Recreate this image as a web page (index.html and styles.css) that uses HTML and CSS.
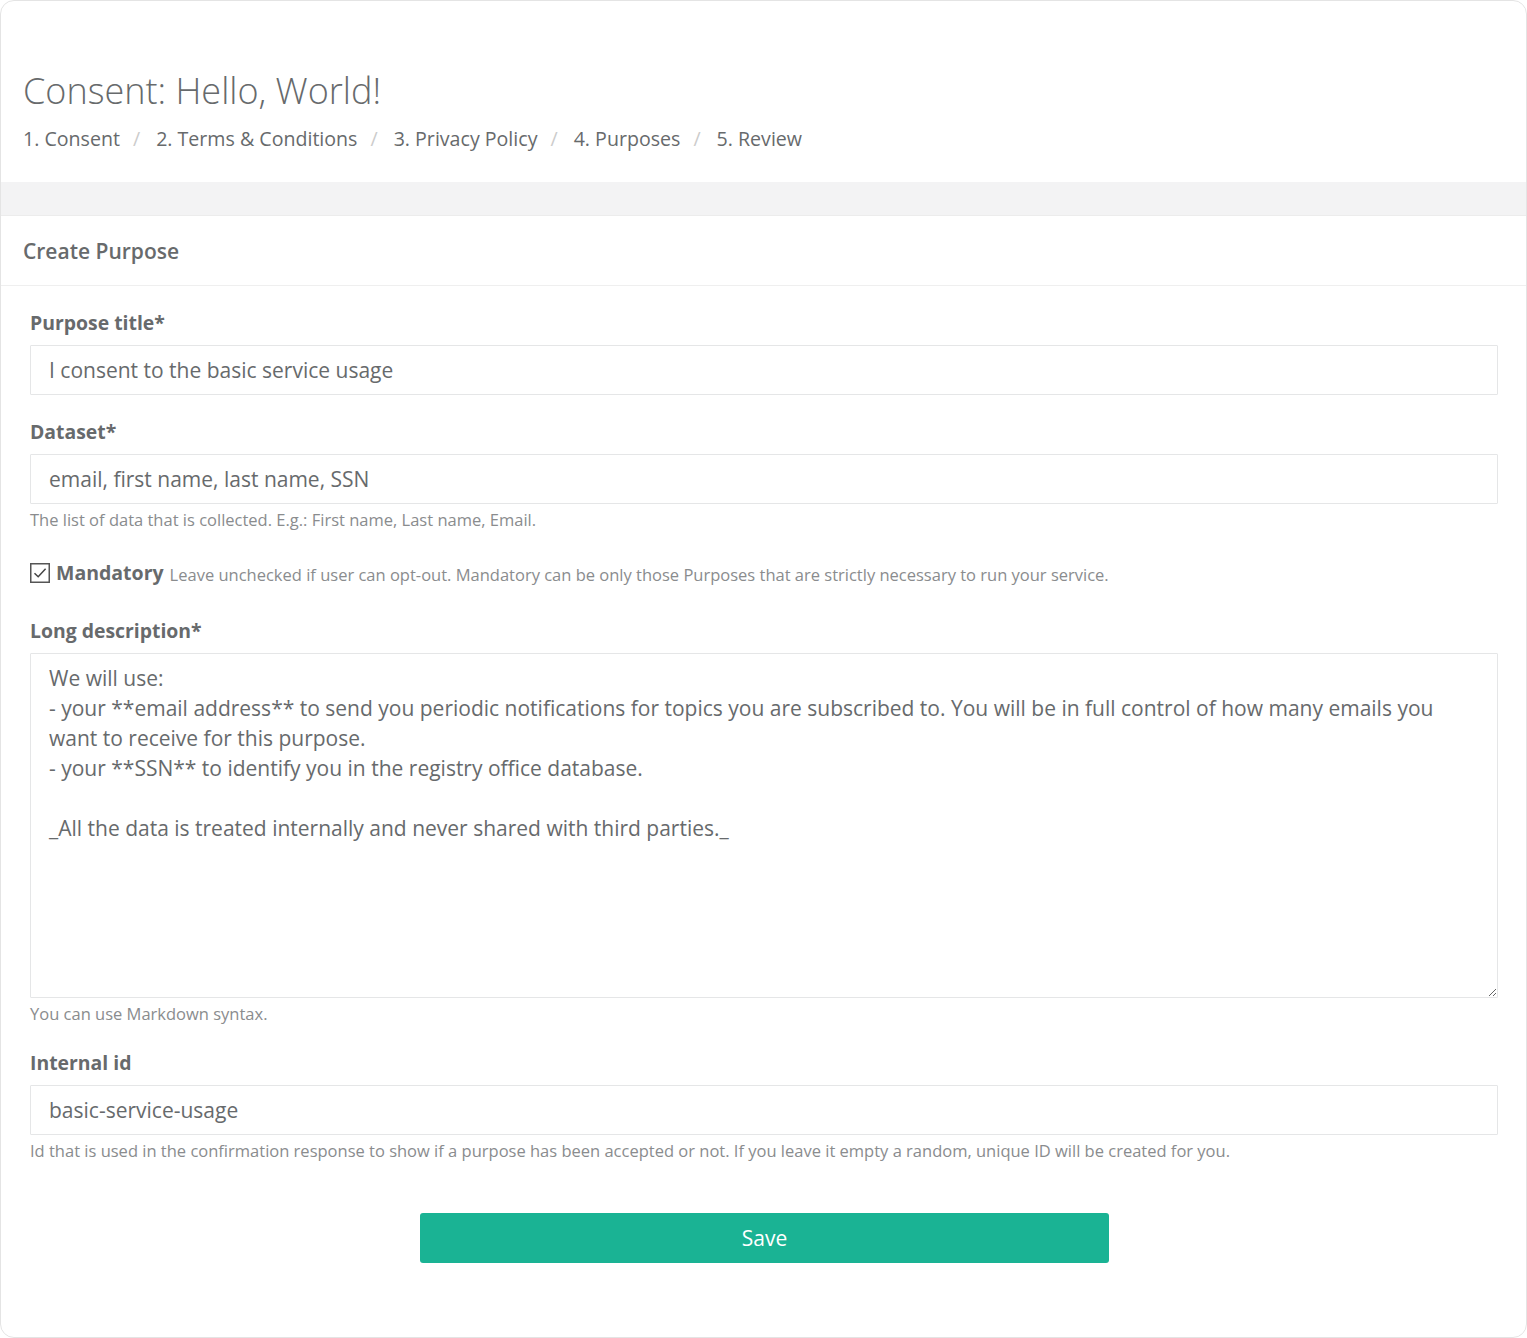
FILE: index.html
```html
<!DOCTYPE html>
<html lang="en">
<head>
    <meta charset="UTF-8">
    <title>Consent: Hello, World!</title>
    <meta name="viewport" content="width=device-width, initial-scale=1.0">
    <link rel="stylesheet" href="styles.css">
</head>
<body>
    <div class="frame">
        <div class="page-heading">
            <h1>Consent: Hello, World!</h1>
            <ol class="breadcrumb">
                <li>1. Consent</li>
                <li>2. Terms &amp; Conditions</li>
                <li>3. Privacy Policy</li>
                <li>4. Purposes</li>
                <li>5. Review</li>
            </ol>
        </div>
        <div class="band"></div>
        <div class="ibox">
            <div class="ibox-title">
                <h5>Create Purpose</h5>
            </div>
            <form class="ibox-content">
                <div class="form-group">
                    <label for="title">Purpose title*</label>
                    <input type="text" id="title" class="form-control" value="I consent to the basic service usage">
                </div>
                <div class="form-group">
                    <label for="dataset">Dataset*</label>
                    <input type="text" id="dataset" class="form-control" value="email, first name, last name, SSN">
                    <span class="help-block">The list of data that is collected. E.g.: First name, Last name, Email.</span>
                </div>
                <div class="form-group check-group">
                    <span class="check-box">
                        <svg width="20" height="20" viewBox="0 0 20 20">
                            <rect x="0.75" y="0.75" width="18.5" height="18.5" fill="#fff" stroke="#555" stroke-width="1.5"/>
                            <path d="M4.5 10.2 L8.2 13.8 L15.6 5.8" fill="none" stroke="#444" stroke-width="1.5"/>
                        </svg>
                    </span>
                    <strong>Mandatory</strong>
                    <span class="check-help">Leave unchecked if user can opt-out. Mandatory can be only those Purposes that are strictly necessary to run your service.</span>
                </div>
                <div class="form-group desc-group">
                    <label for="description">Long description*</label>
                    <textarea id="description" class="form-control">We will use:
- your **email address** to send you periodic notifications for topics you are subscribed to. You will be in full control of how many emails you want to receive for this purpose.
- your **SSN** to identify you in the registry office database.

_All the data is treated internally and never shared with third parties._</textarea>
                    <span class="help-block">You can use Markdown syntax.</span>
                </div>
                <div class="form-group">
                    <label for="internalId">Internal id</label>
                    <input type="text" id="internalId" class="form-control" value="basic-service-usage">
                    <span class="help-block">Id that is used in the confirmation response to show if a purpose has been accepted or not. If you leave it empty a random, unique ID will be created for you.</span>
                </div>
                <button type="button" class="btn-save">Save</button>
            </form>
        </div>
    </div>
</body>
</html>
```

FILE: styles.css
```css
body {
    margin: 0;
    font-family: 'Open Sans', 'Liberation Sans', Arial, sans-serif;
    background: #fff;
    color: #676a6c;
}
.frame {
    box-sizing: border-box;
    width: 1527px;
    height: 1338px;
    border: 1px solid #e4e4e4;
    border-radius: 14px;
    overflow: hidden;
    background: #fff;
}
.page-heading {
    height: 181px;
    box-sizing: border-box;
    padding: 69px 22px 0;
}
.page-heading h1 {
    margin: 0;
    font-size: 36px;
    font-weight: 300;
    line-height: 42px;
    color: #676a6c;
}
.breadcrumb {
    list-style: none;
    margin: 13px 0 0;
    padding: 0;
    display: flex;
    font-size: 19.6px;
    line-height: 28px;
}
.breadcrumb li + li::before {
    content: "/";
    color: #ccc;
    padding: 0 16px 0 13px;
}
.band {
    height: 33px;
    background: #f3f3f4;
}
.ibox-title {
    height: 71px;
    box-sizing: border-box;
    padding: 0 22px;
    border-top: 1px solid #ececec;
    border-bottom: 1px solid #efefef;
    display: flex;
    align-items: center;
}
.ibox-title h5 {
    margin: 0;
    font-size: 21px;
    font-weight: 600;
    color: #676a6c;
}
.ibox-content {
    padding: 23px 28px 0 29px;
}
.form-group {
    margin-bottom: 23px;
}
.form-group label {
    display: block;
    font-size: 19.4px;
    font-weight: 700;
    line-height: 28px;
    margin-bottom: 8px;
    color: #676a6c;
}
.form-control {
    display: block;
    box-sizing: border-box;
    width: 100%;
    height: 50px;
    padding: 0 18px;
    border: 1px solid #e5e6e7;
    border-radius: 1px;
    font-family: inherit;
    font-size: 21px;
    color: #676a6c;
    background: #fff;
}
textarea.form-control {
    height: 345px;
    padding: 9px 18px;
    line-height: 30px;
    resize: vertical;
}
.help-block {
    display: block;
    margin-top: 5px;
    font-size: 16.5px;
    line-height: 22px;
    color: #8a8c8e;
}
.check-group {
    display: flex;
    align-items: center;
    height: 28px;
    padding-top: 5px;
    margin-bottom: 30px;
    line-height: 28px;
}
.check-box {
    display: flex;
    margin-right: 6px;
}
.check-group strong {
    font-size: 19.5px;
    font-weight: 700;
    margin-right: 6px;
}
.check-help {
    font-size: 16.5px;
    color: #8a8c8e;
    margin-top: 3px;
}
.desc-group {
    margin-bottom: 24px;
}
.btn-save {
    display: block;
    width: 689px;
    height: 50px;
    margin: 51px 0 0 390px;
    border: none;
    border-radius: 3px;
    background: #1ab394;
    color: #fff;
    font-family: inherit;
    font-size: 21px;
    cursor: pointer;
}
```
